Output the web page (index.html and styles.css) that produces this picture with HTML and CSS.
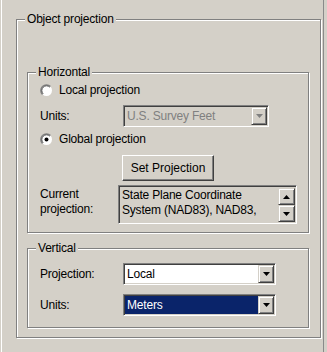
FILE: index.html
```html
<!DOCTYPE html>
<html lang="en">
<head>
<meta charset="utf-8" />
<title>Object projection</title>
<link rel="stylesheet" href="styles.css">
</head>
<body>
<div class="panel">
  <div class="group outer">
    <span class="group-title">Object projection</span>

    <div class="group horizontal">
      <span class="group-title">Horizontal</span>

      <div class="radio-row">
        <svg class="radio" width="13" height="13" viewBox="0 0 13 13">
          <circle cx="6.5" cy="6.5" r="5.5" fill="#fff" />
          <path d="M2.43 10.57A5.75 5.75 0 0 1 10.57 2.43" fill="none" stroke="#808080" stroke-width="1.2" />
          <path d="M3.14 9.86A4.75 4.75 0 0 1 9.86 3.14" fill="none" stroke="#404040" stroke-width="1" />
        </svg>
        <span>Local projection</span>
      </div>

      <div class="field-row units-row">
        <span class="label">Units:</span>
        <div class="combo combo-disabled">
          <span class="combo-text">U.S. Survey Feet</span>
          <span class="combo-btn">
            <svg width="7" height="4" viewBox="0 0 7 4"><path d="M0 0h7L3.5 4z" fill="#808080" /></svg>
          </span>
        </div>
      </div>

      <div class="radio-row global-row">
        <svg class="radio" width="13" height="13" viewBox="0 0 13 13">
          <circle cx="6.5" cy="6.5" r="5.5" fill="#fff" />
          <path d="M2.43 10.57A5.75 5.75 0 0 1 10.57 2.43" fill="none" stroke="#808080" stroke-width="1.2" />
          <path d="M3.14 9.86A4.75 4.75 0 0 1 9.86 3.14" fill="none" stroke="#404040" stroke-width="1" />
          <circle cx="6.5" cy="6.5" r="2" fill="#000" />
        </svg>
        <span>Global projection</span>
      </div>

      <div class="button-row">
        <button class="push-btn" type="button">Set Projection</button>
      </div>

      <div class="current-row">
        <span class="label label-current">Current<br />projection:</span>
        <div class="textbox">
          <div class="textbox-text">State Plane Coordinate<br />System (NAD83), NAD83,</div>
          <div class="scroll">
            <span class="scroll-btn">
              <svg width="7" height="4" viewBox="0 0 7 4"><path d="M0 4h7L3.5 0z" /></svg>
            </span>
            <span class="scroll-btn">
              <svg width="7" height="4" viewBox="0 0 7 4"><path d="M0 0h7L3.5 4z" /></svg>
            </span>
          </div>
        </div>
      </div>
    </div>

    <div class="group vertical">
      <span class="group-title">Vertical</span>

      <div class="field-row">
        <span class="label">Projection:</span>
        <div class="combo combo-wide">
          <span class="combo-text">Local</span>
          <span class="combo-btn">
            <svg width="7" height="4" viewBox="0 0 7 4"><path d="M0 0h7L3.5 4z" /></svg>
          </span>
        </div>
      </div>

      <div class="field-row units-vertical">
        <span class="label">Units:</span>
        <div class="combo combo-wide combo-selected">
          <span class="combo-text">Meters</span>
          <span class="combo-btn">
            <svg width="7" height="4" viewBox="0 0 7 4"><path d="M0 0h7L3.5 4z" /></svg>
          </span>
        </div>
      </div>
    </div>
  </div>
</div>
</body>
</html>
```

FILE: styles.css
```css
body {
  margin: 0;
  background-color: #d4d0c8;
  font-family: "Liberation Sans", Arial, sans-serif;
  font-size: 12px;
  letter-spacing: -0.2px;
  color: #000;
}

.panel {
  margin-left: 1px;
  width: 323px;
  height: 352px;
  box-sizing: border-box;
  border-left: 1px solid #fff;
  border-right: 1px solid #8a8a8a;
  padding: 19px 0 0 14px;
}

/* etched group box */
.group {
  position: relative;
  box-sizing: border-box;
  border: 1px solid #808080;
  box-shadow: inset 1px 1px 0 #fff, 1px 1px 0 #fff;
}

.group-title {
  position: absolute;
  top: -8px;
  left: 8px;
  padding: 0 2px;
  background-color: #d4d0c8;
  line-height: 14px;
}

.outer {
  width: 305px;
  height: 319px;
  padding: 52px 10px 0;
}

.horizontal {
  width: 282px;
  height: 161px;
  padding: 9px 0 0 12px;
}

.vertical {
  width: 282px;
  height: 80px;
  margin-top: 15px;
  padding: 14px 0 0 12px;
}

.radio-row {
  display: flex;
  align-items: center;
  gap: 6px;
  height: 16px;
}

.radio {
  flex: none;
}

.field-row {
  display: flex;
  align-items: center;
  height: 22px;
}

.units-row {
  margin-top: 7px;
}

.global-row {
  margin-top: 4px;
}

.units-vertical {
  margin-top: 9px;
}

.label {
  flex: none;
  width: 83px;
}

/* sunken combo box */
.combo {
  display: flex;
  box-sizing: border-box;
  width: 146px;
  height: 22px;
  border: 1px solid;
  border-color: #808080 #fff #fff #808080;
  box-shadow: inset 1px 1px 0 #404040, inset -1px -1px 0 #d4d0c8;
  padding: 1px;
  background-color: #fff;
}

.combo-wide {
  width: 153px;
}

.combo-disabled {
  background-color: #d4d0c8;
  color: #808080;
}

.combo-selected {
  background-color: #0a246a;
  color: #fff;
}

.combo-text {
  flex: 1;
  padding-left: 2px;
  line-height: 18px;
  white-space: nowrap;
}

.combo-btn,
.scroll-btn {
  display: flex;
  align-items: center;
  justify-content: center;
  box-sizing: border-box;
  background-color: #d4d0c8;
  border: 1px solid;
  border-color: #d4d0c8 #404040 #404040 #d4d0c8;
  box-shadow: inset 1px 1px 0 #fff, inset -1px -1px 0 #808080;
}

.combo-btn {
  flex: none;
  width: 16px;
  height: 18px;
}

.button-row {
  margin-top: 8px;
  padding-left: 82px;
}

.push-btn {
  display: block;
  box-sizing: border-box;
  width: 92px;
  height: 26px;
  padding: 0;
  font: inherit;
  color: #000;
  background-color: #d4d0c8;
  border: 1px solid;
  border-color: #fff #404040 #404040 #fff;
  box-shadow: inset -1px -1px 0 #808080;
}

.current-row {
  display: flex;
  align-items: flex-start;
  margin-top: 4px;
}

.label-current {
  width: 78px;
  padding-top: 2px;
  line-height: 15px;
}

.textbox {
  display: flex;
  box-sizing: border-box;
  width: 179px;
  height: 39px;
  border: 1px solid;
  border-color: #808080 #fff #fff #808080;
  box-shadow: inset 1px 1px 0 #404040, inset -1px -1px 0 #d4d0c8;
  padding: 1px;
}

.textbox-text {
  flex: 1;
  padding: 1px 0 0 2px;
  line-height: 15px;
  white-space: nowrap;
  overflow: hidden;
}

.scroll {
  display: flex;
  flex-direction: column;
  padding-top: 1px;
}

.scroll-btn {
  width: 17px;
  height: 17px;
}
```
